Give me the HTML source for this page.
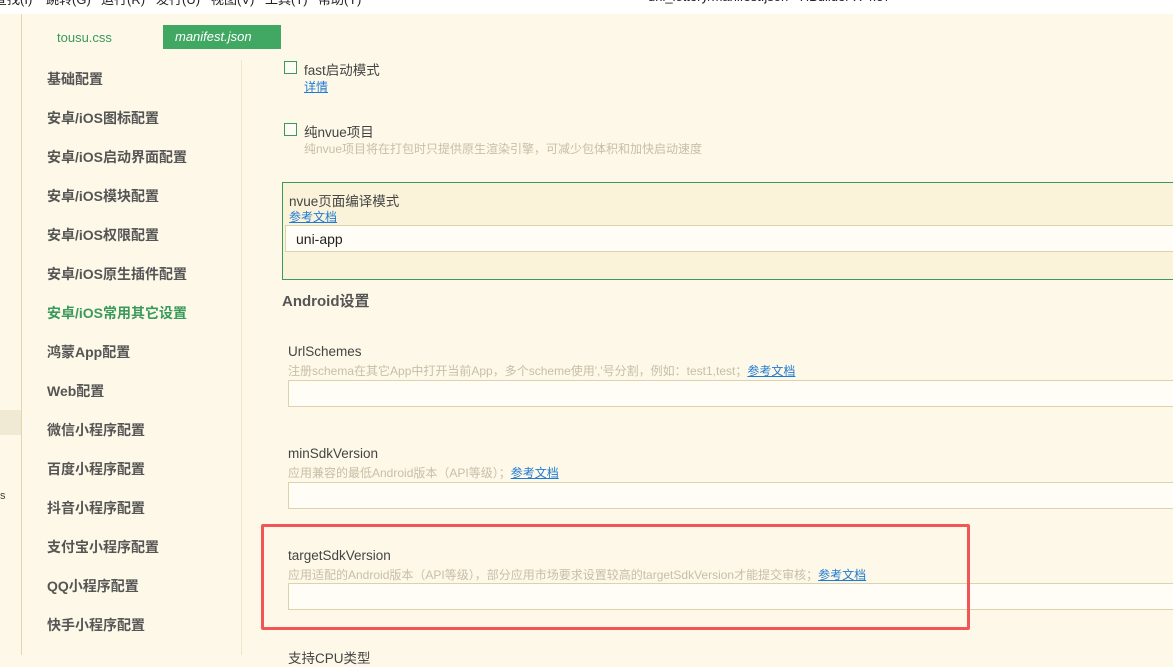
<!DOCTYPE html>
<html><head><meta charset="utf-8"><style>
*{margin:0;padding:0;box-sizing:border-box}
body{width:1173px;height:655px;overflow:hidden;background:#fdf8e7;font-family:"Liberation Sans","Noto Sans CJK SC",sans-serif;position:relative;color:#555}
.a{position:absolute;white-space:nowrap}
.menu{left:0;top:0;width:1173px;height:14px;background:#fff;overflow:hidden}
.menu span{position:absolute;top:-11px;font-size:13px;color:#222}
.nav{font-size:14px;font-weight:bold;color:#555;left:47px}
.lbl{font-size:13.5px;color:#444}
.desc{font-size:12px;color:#c6bfa8}
.lk{color:#1e7ad6;text-decoration:underline}
.inp{background:#fffdf6;border:1px solid #dcd3ac;height:27px}
.cb{width:13px;height:13px;border:1px solid #3a9a5c;background:#fffdf5}
</style></head><body>
<div class="a menu"><span style="left:-6px">查找(I)</span><span style="left:46px">跳转(G)</span><span style="left:101px">运行(R)</span><span style="left:156px">发行(U)</span><span style="left:211px">视图(V)</span><span style="left:265px">工具(T)</span><span style="left:318px">帮助(Y)</span><span style="left:648px">uni_lottery/manifest.json - HBuilder X 4.57</span></div>
<div class="a" style="left:21px;top:14px;width:1px;height:641px;background:#e0d6b0"></div>
<div class="a" style="left:0;top:410px;width:21px;height:25px;background:#f0e9d4"></div>
<div class="a" style="left:0;top:490px;font-size:11px;color:#444">s</div>
<div class="a" style="left:57px;top:30px;font-size:13px;color:#3a9a5c">tousu.css</div>
<div class="a" style="left:163px;top:25px;width:118px;height:24px;background:#41a863;color:#fff;font-style:italic;font-size:13px;padding:4px 0 0 12px">manifest.json</div>
<div class="a" style="left:241px;top:60px;width:1px;height:595px;background:#efe7cc"></div>
<div class="a nav" style="top:69px">基础配置</div>
<div class="a nav" style="top:108px">安卓/iOS图标配置</div>
<div class="a nav" style="top:147px">安卓/iOS启动界面配置</div>
<div class="a nav" style="top:186px">安卓/iOS模块配置</div>
<div class="a nav" style="top:225px">安卓/iOS权限配置</div>
<div class="a nav" style="top:264px">安卓/iOS原生插件配置</div>
<div class="a nav" style="top:303px;color:#3a9a5c">安卓/iOS常用其它设置</div>
<div class="a nav" style="top:342px">鸿蒙App配置</div>
<div class="a nav" style="top:381px">Web配置</div>
<div class="a nav" style="top:420px">微信小程序配置</div>
<div class="a nav" style="top:459px">百度小程序配置</div>
<div class="a nav" style="top:498px">抖音小程序配置</div>
<div class="a nav" style="top:537px">支付宝小程序配置</div>
<div class="a nav" style="top:576px">QQ小程序配置</div>
<div class="a nav" style="top:615px">快手小程序配置</div>

<div class="a cb" style="left:284px;top:61px"></div>
<div class="a lbl" style="left:304px;top:59px">fast启动模式</div>
<div class="a desc lk" style="left:304px;top:78px;color:#1e7ad6">详情</div>
<div class="a cb" style="left:284px;top:123px"></div>
<div class="a lbl" style="left:304px;top:121px">纯nvue项目</div>
<div class="a desc" style="left:304px;top:140px">纯nvue项目将在打包时只提供原生渲染引擎，可减少包体积和加快启动速度</div>

<div class="a" style="left:282px;top:182px;width:900px;height:98px;background:#faf3da;border:1px solid #3a9a5c"></div>
<div class="a lbl" style="left:289px;top:190px">nvue页面编译模式</div>
<div class="a desc lk" style="left:289px;top:208px;color:#1e7ad6">参考文档</div>
<div class="a inp" style="left:285px;top:225px;width:900px;color:#222;font-size:14px;padding:5px 0 0 10px">uni-app</div>
<div class="a" style="left:282px;top:290px;font-size:15px;font-weight:bold;color:#555">Android设置</div>

<div class="a lbl" style="left:288px;top:344px">UrlSchemes</div>
<div class="a desc" style="left:288px;top:362px">注册schema在其它App中打开当前App，多个scheme使用','号分割，例如：test1,test；<span class="lk">参考文档</span></div>
<div class="a inp" style="left:288px;top:380px;width:900px"></div>

<div class="a lbl" style="left:288px;top:446px">minSdkVersion</div>
<div class="a desc" style="left:288px;top:464px">应用兼容的最低Android版本（API等级）；<span class="lk">参考文档</span></div>
<div class="a inp" style="left:288px;top:482px;width:900px"></div>

<div class="a lbl" style="left:288px;top:548px">targetSdkVersion</div>
<div class="a desc" style="left:288px;top:566px">应用适配的Android版本（API等级），部分应用市场要求设置较高的targetSdkVersion才能提交审核；<span class="lk">参考文档</span></div>
<div class="a inp" style="left:288px;top:583px;width:900px"></div>
<div class="a" style="left:261px;top:524px;width:709px;height:106px;border:3px solid #f25555;border-radius:2px"></div>
<div class="a lbl" style="left:288px;top:647px">支持CPU类型</div>
</body></html>
